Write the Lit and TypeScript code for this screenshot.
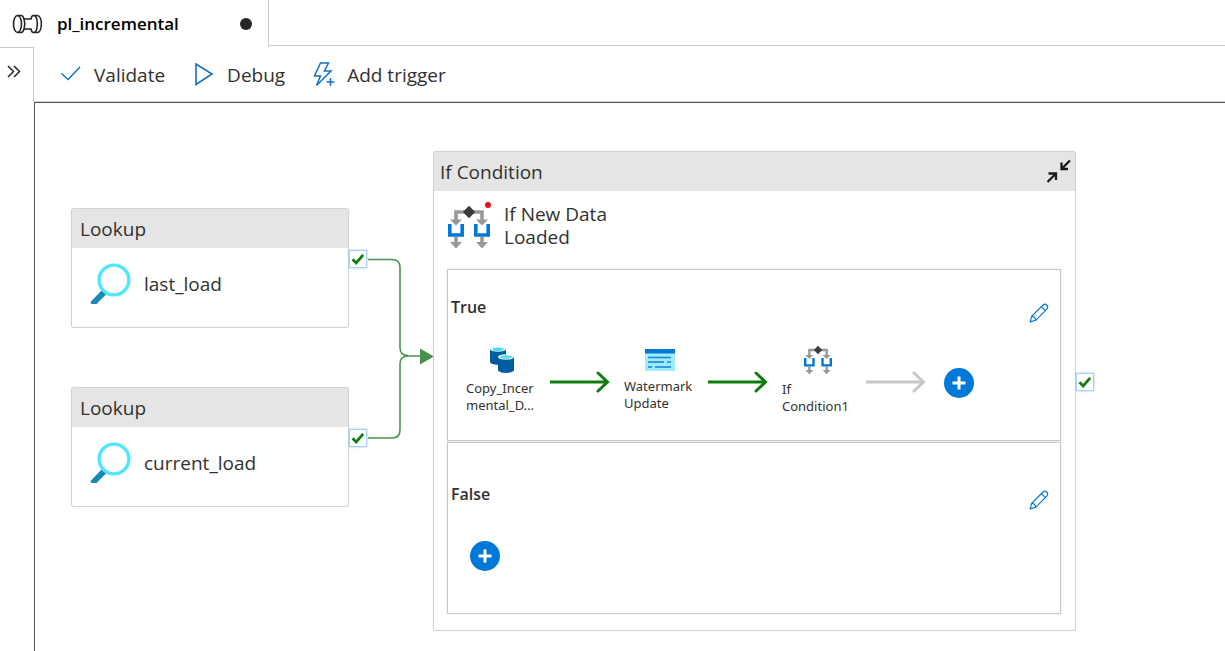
import { LitElement, html, css, svg } from "lit";
import { customElement, property } from "lit/decorators.js";
import { styleMap } from "lit/directives/style-map.js";

interface Box {
  left: number;
  top: number;
  width: number;
}

interface Lookup extends Box {
  name: string;
}

type StepIcon = "copy" | "script" | "condition";

interface Step {
  icon: StepIcon;
  lines: string[];
  done: boolean;
}

const lookups: Lookup[] = [
  { name: "last_load", left: 36, top: 105, width: 278 },
  { name: "current_load", left: 36, top: 284, width: 278 },
];

const conditionBox: Box = { left: 398, top: 48, width: 643 };

const trueSteps: Step[] = [
  { icon: "copy", lines: ["Copy_Incer", "mental_D..."], done: true },
  { icon: "script", lines: ["Watermark", "Update"], done: true },
  { icon: "condition", lines: ["If", "Condition1"], done: false },
];

const place = (b: Box) =>
  styleMap({ left: `${b.left}px`, top: `${b.top}px`, width: `${b.width}px` });

const conditionShapes = svg`
  <path d="M17 7H8v11M25 7h9v11M8 32v7M34 32v7" fill="none" stroke="#999" stroke-width="3.6"/>
  <path d="M2 14.500h12l-6 6zM28 14.500h12l-6 6zM2 37h12l-6 6.500zM28 37h12l-6 6.500z" fill="#999"/>
  <path d="M1.800 19v11h12.400V19M27.800 19v11h12.400V19" fill="none" stroke="#0078d7" stroke-width="3.600"/>
  <path d="M21 .800l6.200 6.200-6.200 6.200L14.800 7z" fill="#3b3b3b"/>`;

const conditionIcon = (width: number, height: number) => html`
  <svg width=${width} height=${height} viewBox="0 0 42 44" aria-hidden="true">${conditionShapes}</svg>`;

const copyIcon = html`
  <svg width="26" height="28" viewBox="0 0 26 28" aria-hidden="true">
    <path d="M1 3v13c0 1.500 3.500 2.800 8 2.800s8-1.300 8-2.800V3z" fill="#005ba1"/>
    <ellipse cx="9" cy="3.200" rx="8" ry="2.600" fill="#e8f4fb"/>
    <ellipse cx="9" cy="3.200" rx="5.800" ry="1.700" fill="#50dcf5"/>
    <path d="M9 11v13c0 1.500 3.500 2.900 8 2.900s8-1.400 8-2.900V11z" fill="#005ba1"/>
    <ellipse cx="17" cy="11" rx="8" ry="2.700" fill="#e8f4fb"/>
    <ellipse cx="17" cy="11" rx="5.800" ry="1.700" fill="#50dcf5"/>
  </svg>`;

const scriptIcon = html`
  <svg width="30" height="24" viewBox="0 0 30 24" aria-hidden="true">
    <path d="M0 1h30v22H0z" fill="#9cebff"/>
    <path d="M0 1h30v4.500H0z" fill="#0078d4"/>
    <path d="M3 9.500h23M3 14h16M22 14h4M3 19h4M10 19h16" stroke="#1683d3" stroke-width="1.700"/>
  </svg>`;

const lookupIcon = html`
  <svg width="42" height="42" viewBox="0 0 42 42" aria-hidden="true">
    <path d="M12.500 26.500L1 38.500q-1.200 2.500 1.500 2.500h4L17 30.500z" fill="#198ab3"/>
    <circle cx="24" cy="17" r="14.900" fill="#fff" stroke="#50e6ff" stroke-width="3.400"/>
  </svg>`;

const checkIcon = html`
  <svg width="14" height="14" viewBox="0 0 14 14" aria-hidden="true">
    <path d="M1.500 7.200L5.200 11l7-8.200" fill="none" stroke="#107c10" stroke-width="2.700"/>
  </svg>`;

const pencilIcon = html`
  <svg width="20" height="20" viewBox="0 0 20 20" fill="none" stroke="#0078d4" stroke-width="1.200" aria-hidden="true">
    <path d="M1.200 18.800l1.500-5.600L14 2c2.700-2.300 6 1 4 3.900L6.800 17.300z"/>
    <path d="M2.700 13.200c2.100.300 3.700 2 4.100 4.100M12.400 3.600l4 4"/>
  </svg>`;

@customElement("port-check")
export class PortCheck extends LitElement {
  static styles = css`
    :host { display: block; }
    .port {
      display: grid;
      place-items: center;
      width: 18px;
      height: 18px;
      padding: 0;
      border: 1px solid #a9d3f5;
      background: #fff;
      box-shadow: 0 0 2px #8cc4f2;
    }
  `;

  render() {
    return html`<button class="port" aria-label="On success">${checkIcon}</button>`;
  }
}

@customElement("lookup-node")
export class LookupNode extends LitElement {
  @property() name = "";

  static styles = css`
    :host {
      display: block;
      box-sizing: border-box;
      border: 1px solid #d2d2d2;
      border-radius: 3px;
      background: #fff;
      box-shadow: 0 0 1px #d8d8d8;
    }
    .title {
      padding: 9px 8px 7px;
      background: #e5e5e5;
      line-height: 23px;
    }
    .content {
      display: flex;
      align-items: center;
      gap: 12px;
      height: 72px;
      padding: 0 16px 7px 18px;
    }
    .port {
      position: absolute;
      left: calc(100% + 1px);
      top: 41px;
    }
  `;

  render() {
    return html`
      <div class="title">Lookup</div>
      <div class="content">${lookupIcon}<span>${this.name}</span></div>
      <port-check class="port"></port-check>
    `;
  }
}

@customElement("branch-panel")
export class BranchPanel extends LitElement {
  @property() label = "";
  @property({ attribute: false }) steps: Step[] = [];

  static styles = css`
    :host {
      display: block;
      box-sizing: border-box;
      height: 172px;
      border: 1px solid #c8c8c8;
      box-shadow: 0 0 1px #c8c8c8;
    }
    .panel {
      display: flex;
      flex-direction: column;
      height: 100%;
    }
    .head {
      display: flex;
      justify-content: space-between;
      padding: 26px 11px 0 3px;
    }
    .head.low { padding-top: 40px; }
    .name {
      font-size: 16px;
      font-weight: 600;
      line-height: 22px;
    }
    .edit {
      display: flex;
      padding: 7px 0 0;
      border: 0;
      background: none;
    }
    .flow {
      display: flex;
      align-items: center;
      height: 72px;
      padding-left: 18px;
      margin: auto 0 21px;
    }
    .empty { padding-left: 22px; }
    .step {
      display: flex;
      flex-direction: column;
      align-items: center;
      gap: 6px;
      width: 72px;
      margin-bottom: 6px;
      font-family: "Noto Sans", sans-serif;
      font-size: 13px;
      line-height: 17px;
    }
    .caption {
      align-self: stretch;
      white-space: nowrap;
    }
    .line { display: block; }
    .arrow { margin: 0 14px 2px 12px; }
    .add {
      display: grid;
      place-items: center;
      width: 30px;
      height: 30px;
      margin-left: 4px;
      padding: 0;
      border: 0;
      border-radius: 50%;
      background: #0078d7;
    }
    .empty .add { margin-left: 0; }
  `;

  private icon(kind: StepIcon) {
    if (kind === "copy") return copyIcon;
    if (kind === "script") return scriptIcon;
    return conditionIcon(28, 30);
  }

  render() {
    const filled = this.steps.length > 0;
    return html`
      <div class="panel">
        <div class="head ${filled ? "" : "low"}">
          <span class="name">${this.label}</span>
          <button class="edit" aria-label="Edit ${this.label} activities">${pencilIcon}</button>
        </div>
        <div class="flow ${filled ? "" : "empty"}">
          ${this.steps.map(
            (s) => html`
              <div class="step">
                ${this.icon(s.icon)}
                <div class="caption">${s.lines.map((l) => html`<span class="line">${l}</span>`)}</div>
              </div>
              <svg class="arrow" width="60" height="22" viewBox="0 0 60 22" fill="none"
                stroke=${s.done ? "#107c10" : "#c8c6c4"} stroke-width="3" aria-hidden="true">
                <path d="M0 11h57"/><path d="M48 2l9.500 9-9.500 9" stroke-linecap="round"/>
              </svg>
            `
          )}
          <button class="add" aria-label="Add activity">
            <svg width="14" height="14" viewBox="0 0 14 14" stroke="#fff" stroke-width="3" aria-hidden="true">
              <path d="M7 .5v13M.5 7h13"/>
            </svg>
          </button>
        </div>
      </div>
    `;
  }
}

@customElement("condition-node")
export class ConditionNode extends LitElement {
  static styles = css`
    :host {
      display: block;
      box-sizing: border-box;
      border: 1px solid #d2d2d2;
      border-radius: 3px;
      background: #fff;
      box-shadow: 0 0 1px #d8d8d8;
    }
    .title {
      display: flex;
      align-items: center;
      justify-content: space-between;
      height: 39px;
      padding: 0 4px 0 6px;
      background: #e5e5e5;
    }
    .collapse {
      display: flex;
      padding: 0;
      border: 0;
      background: none;
    }
    .summary {
      display: flex;
      gap: 14px;
      padding: 12px 14px 0;
    }
    .name {
      width: 120px;
      line-height: 23px;
    }
    .mark { position: relative; display: flex; padding-top: 2px; }
    .alert {
      position: absolute;
      right: -1px;
      top: -1px;
      width: 6px;
      height: 6px;
      border-radius: 50%;
      background: #e81123;
    }
    .branches {
      display: grid;
      gap: 1px;
      padding: 20px 14px 16px 13px;
    }
    .port {
      position: absolute;
      left: calc(100% + 1px);
      top: 221px;
    }
  `;

  render() {
    return html`
      <div class="title">
        <span>If Condition</span>
        <button class="collapse" aria-label="Collapse">
          <svg width="26" height="26" viewBox="0 0 26 26" fill="none" stroke="#1b1b1b" stroke-width="2.300" aria-hidden="true">
            <path d="M25 1.500l-8 8M16.500 3.500v6.500H23M2.500 23l8-8M3.500 14.500H11V21"/>
          </svg>
        </button>
      </div>
      <div class="summary">
        <div class="mark">${conditionIcon(42, 44)}<span class="alert"></span></div>
        <div class="name">If New Data Loaded</div>
      </div>
      <div class="branches">
        <branch-panel label="True" .steps=${trueSteps}></branch-panel>
        <branch-panel label="False"></branch-panel>
      </div>
      <port-check class="port"></port-check>
    `;
  }
}

@customElement("app-root")
export class AppRoot extends LitElement {
  static styles = css`
    :host {
      display: flex;
      flex-direction: column;
      height: 100vh;
      overflow: hidden;
      background: #fff;
      color: #323130;
      font-family: "Open Sans", "Noto Sans", sans-serif;
      font-size: 19px;
    }
    button {
      border: 0;
      background: none;
      color: inherit;
      font: inherit;
    }
    .tabs {
      display: flex;
      height: 47px;
      flex: none;
    }
    .tab {
      display: flex;
      align-items: center;
      width: 269px;
      padding: 0 16px 0 12px;
      border-right: 1px solid #c8c8c8;
      color: #000;
      font-size: 17px;
      font-weight: 600;
    }
    .tab-name { margin: 0 auto 0 14px; }
    .strip {
      flex: 1;
      height: 45px;
      border-bottom: 1px solid #c8c8c8;
    }
    .body {
      display: flex;
      flex: 1;
      min-height: 0;
    }
    .rail {
      box-sizing: border-box;
      width: 34px;
      border-top: 1px solid #c8c8c8;
    }
    .expand {
      display: flex;
      width: 100%;
      padding: 17px 0 0 7px;
    }
    .main {
      display: flex;
      flex: 1;
      flex-direction: column;
      min-width: 0;
    }
    .toolbar {
      display: flex;
      align-items: center;
      gap: 28px;
      height: 54px;
      padding-left: 26px;
      border-left: 1px solid #c8c8c8;
      margin-left: -1px;
      border-bottom: 1px solid #d8d8d8;
    }
    .action {
      display: flex;
      align-items: center;
      gap: 12px;
      padding: 2px 0 0;
      line-height: 24px;
    }
    .canvas {
      position: relative;
      flex: 1;
      overflow: hidden;
      border-top: 1px solid #505050;
      border-left: 1px solid #505050;
    }
    .edges {
      position: absolute;
      left: 333px;
      top: 147px;
    }
    .node { position: absolute; }
  `;

  render() {
    return html`
      <div class="tabs">
        <button class="tab">
          <svg width="31" height="20" viewBox="0 0 31 20" fill="none" stroke="#262626" stroke-width="1.600" aria-hidden="true">
            <ellipse cx="5.500" cy="10" rx="4" ry="8.500"/>
            <path d="M5.500 1.500H9c1.500 0 2.500 1.500 3 3.500h7c.300-2 1-3.500 2.500-3.500H25c5.800 0 5.800 17 0 17h-3.500c-1.500 0-2.200-1.500-2.500-3.500h-7c-.500 2-1.500 3.500-3 3.500H5.500M12 5c1 3 1 7 0 10M21.500 1.500c5 0 5 17 0 17"/>
          </svg>
          <span class="tab-name">pl_incremental</span>
          <svg width="12" height="12" viewBox="0 0 12 12" aria-hidden="true"><circle cx="6" cy="6" r="6" fill="#262626"/></svg>
        </button>
        <div class="strip"></div>
      </div>
      <div class="body">
        <nav class="rail">
          <button class="expand" aria-label="Expand">
            <svg width="14" height="13" viewBox="0 0 14 13" fill="none" stroke="#262626" stroke-width="1.500" aria-hidden="true">
              <path d="M1 1l5.500 5.500L1 12M7 1l5.500 5.500L7 12"/>
            </svg>
          </button>
        </nav>
        <div class="main">
          <div class="toolbar">
            <button class="action">
              <svg width="22" height="22" viewBox="0 0 22 22" fill="none" stroke="#1470c4" stroke-width="1.500" aria-hidden="true">
                <path d="M1.500 9.500l6.500 6L20 3"/>
              </svg>
              Validate
            </button>
            <button class="action">
              <svg width="22" height="24" viewBox="0 0 22 24" fill="none" stroke="#1470c4" stroke-width="1.600" aria-hidden="true">
                <path d="M3 1v20.500L19 11z"/>
              </svg>
              Debug
            </button>
            <button class="action">
              <svg width="22" height="26" viewBox="0 0 22 26" fill="none" stroke="#1470c4" stroke-width="1.500" aria-hidden="true">
                <path d="M7.500 1h8l-4 8h6.500L3.500 23.500l4-9.500H1.500zM17.500 16v8M13.500 20h8"/>
              </svg>
              Add trigger
            </button>
          </div>
          <main class="canvas">
            <svg class="edges" width="70" height="196" viewBox="0 0 70 196" aria-hidden="true">
              <path d="M0 9.500h24q8 0 8 8v80q0 8 8 8M0 188h24q8 0 8-8v-66q0-8 8-8h14" fill="none" stroke="#4a9550" stroke-width="1.600"/>
              <path d="M52 98.500l14 8-14 8z" fill="#46914c"/>
            </svg>
            ${lookups.map((l) => html`<lookup-node class="node" style=${place(l)} name=${l.name}></lookup-node>`)}
            <condition-node class="node" style=${place(conditionBox)}></condition-node>
          </main>
        </div>
      </div>
    `;
  }
}
